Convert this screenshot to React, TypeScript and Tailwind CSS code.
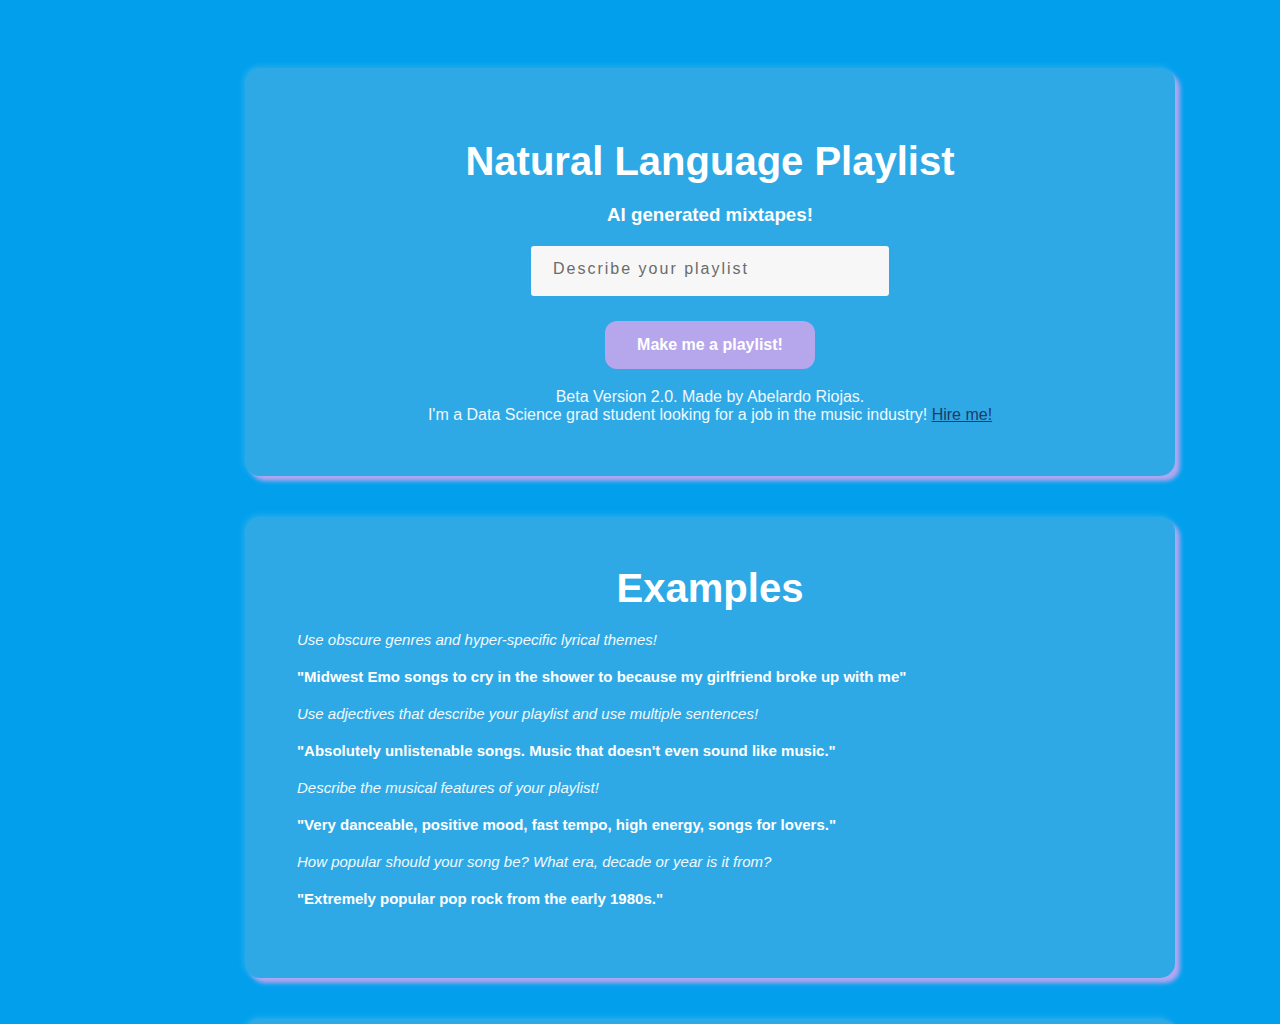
const examples = [
  {
    hint: 'Use obscure genres and hyper-specific lyrical themes!',
    prompt: '"Midwest Emo songs to cry in the shower to because my girlfriend broke up with me"',
  },
  {
    hint: 'Use adjectives that describe your playlist and use multiple sentences!',
    prompt: '"Absolutely unlistenable songs. Music that doesn\'t even sound like music."',
  },
  {
    hint: 'Describe the musical features of your playlist!',
    prompt: '"Very danceable, positive mood, fast tempo, high energy, songs for lovers."',
  },
  {
    hint: 'How popular should your song be? What era, decade or year is it from?',
    prompt: '"Extremely popular pop rock from the early 1980s."',
  },
]

const card =
  'w-[930px] shrink-0 rounded-[15px] bg-[#2ea9e6] text-white shadow-[5px_5px_4px_#b3a6f0,-1px_-1px_6px_rgba(255,255,255,0.18)]'

export default function App() {
  return (
    <div
      className="h-screen overflow-hidden bg-[#02a0ec] pt-[68px] pl-[245px] flex flex-col gap-[41px]"
      style={{ fontFamily: '"Liberation Sans", Arial, sans-serif' }}
    >
      {/* Main card */}
      <div className={`${card} h-[408px] flex flex-col items-center pt-[70px]`}>
        <h1 className="text-[40px] leading-[46px] font-bold">Natural Language Playlist</h1>
        <h3 className="text-[18.72px] leading-[22px] font-bold mt-[20px]">AI generated mixtapes!</h3>
        <input
          placeholder="Describe your playlist"
          className="mt-[20px] w-[358px] h-[50px] rounded-[3px] bg-[#f7f7f7] px-[22px] pb-[4px] text-[16px] tracking-[2px] text-[#333] placeholder:text-[#6b6b6b] outline-none"
        />
        <button className="mt-[25px] w-[210px] h-[48px] rounded-[12px] bg-[#b6a7ec] text-white text-[16px] font-bold">
          Make me a playlist!
        </button>
        <div className="mt-[19px] text-center text-[16px] leading-[18px] text-[#f0f8fd]">
          <p>Beta Version 2.0. Made by Abelardo Riojas.</p>
          <p>
            I'm a Data Science grad student looking for a job in the music industry!{' '}
            <a href="#" className="underline text-[#1f3a66]">Hire me!</a>
          </p>
        </div>
      </div>

      {/* Examples card */}
      <div className={`${card} h-[461px] pt-[48px] px-[52px]`}>
        <h2 className="text-[40px] leading-[46px] font-bold text-center">Examples</h2>
        <div className="mt-[20px] flex flex-col gap-[20px] text-[15px] leading-[17px]">
          {examples.map((e) => (
            <div key={e.hint} className="flex flex-col gap-[20px]">
              <p className="italic text-[#f2f9fd]">{e.hint}</p>
              <p className="font-bold">{e.prompt}</p>
            </div>
          ))}
        </div>
      </div>

      {/* Next card (cut off) */}
      <div className={`${card} h-[400px]`} />
    </div>
  )
}
